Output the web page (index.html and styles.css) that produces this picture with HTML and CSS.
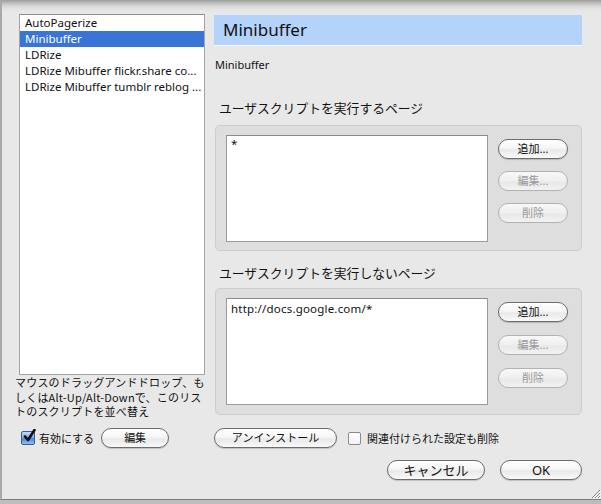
FILE: index.html
```html
<!DOCTYPE html>
<html lang="ja">
<head>
<meta charset="utf-8">
<link rel="stylesheet" href="styles.css">
</head>
<body>
<div class="window">
  <div class="content">
    <div class="left">
      <ul class="list">
        <li>AutoPagerize</li>
        <li class="sel">Minibuffer</li>
        <li>LDRize</li>
        <li>LDRize Mibuffer flickr.share co...</li>
        <li>LDRize Mibuffer tumblr reblog ...</li>
      </ul>
      <p class="help">マウスのドラッグアンドドロップ、も<br>しくはAlt-Up/Alt-Downで、このリス<br>トのスクリプトを並べ替え</p>
    </div>
    <div class="right">
      <div class="title">Minibuffer</div>
      <div class="desc">Minibuffer</div>
      <div class="glabel first">ユーザスクリプトを実行するページ</div>
      <div class="group">
        <div class="area">*</div>
        <div class="btns">
          <button class="btn small">追加...</button>
          <button class="btn small dis">編集...</button>
          <button class="btn small dis">削除</button>
        </div>
      </div>
      <div class="glabel">ユーザスクリプトを実行しないページ</div>
      <div class="group g2">
        <div class="area">http://docs.google.com/*</div>
        <div class="btns">
          <button class="btn small">追加...</button>
          <button class="btn small dis">編集...</button>
          <button class="btn small dis">削除</button>
        </div>
      </div>
    </div>
    <div class="row lrow">
      <span class="cb on"><svg width="14" height="15" viewBox="0 0 14 15"><path d="M3 7.5 L6 11 L12.5 1" fill="none" stroke="#0d0d1a" stroke-width="2.6" stroke-linecap="round" stroke-linejoin="round"/></svg></span>
      <span class="cbl">有効にする</span>
      <button class="btn mid edit">編集</button>
    </div>
    <div class="row rrow">
      <button class="btn mid uninst">アンインストール</button>
      <span class="cb off"></span>
      <span class="cbl wide">関連付けられた設定も削除</span>
    </div>
  </div>
  <div class="footer">
    <button class="btn big cancel">キャンセル</button>
    <button class="btn big ok">OK</button>
  </div>
  <svg class="grip" width="12" height="12" viewBox="0 0 12 12"><path d="M11 3 L3 11 M11 6 L6 11 M11 9 L9 11" stroke="#8a8a8a" stroke-width="1"/><path d="M12 4 L4 12 M12 7 L7 12 M12 10 L10 12" stroke="#fafafa" stroke-width="1"/></svg>
</div>
</body>
</html>
```
FILE: styles.css
```css
* { box-sizing: border-box; }
html, body { margin: 0; padding: 0; }
body {
  background: #bdbdbd;
  width: 601px;
  height: 504px;
  overflow: hidden;
  font-family: "Noto Sans", "Noto Sans CJK JP", sans-serif;
  color: #111;
}
.window {
  position: relative;
  width: 601px;
  height: 500px;
  border-bottom: 1px solid #7c7c7c;
  border-left: 2px solid #a9a9a9;
  background: linear-gradient(to bottom, #9d9d9d 0px, #bdbdbd 3px, #d6d6d6 6px, #e3e3e3 9px, #e8e8e8 12px);
}
.content {
  display: grid;
  grid-template-columns: 190px 368px;
  column-gap: 9px;
  padding: 14px 0 0 13px;
}
.left { display: flex; flex-direction: column; }
.list {
  list-style: none;
  margin: 0 0 0 4px;
  padding: 0;
  width: 186px;
  height: 361px;
  background: #fff;
  border: 1px solid #a3a3a3;
  border-top-color: #8e8e8e;
  font-size: 11.5px;
}
.list li {
  height: 16px;
  line-height: 16px;
  padding-left: 5px;
  white-space: nowrap;
  overflow: hidden;
}
.list li.sel { background: #3875d7; color: #fff; }
.help {
  margin: 0;
  height: 42px;
  font-family: "Noto Sans CJK JP", sans-serif;
  font-size: 11px;
  line-height: 14.5px;
  letter-spacing: 0.2px;
  white-space: nowrap;
}
.right { display: flex; flex-direction: column; }
.title {
  margin-top: 1px;
  height: 31px;
  background: #b4d3fa;
  border-bottom: 1px solid #f6f6f6;
  font-size: 17px;
  line-height: 30px;
  padding-left: 9px;
}
.desc {
  margin-top: 12px;
  font-size: 11px;
  line-height: 14px;
  padding-left: 1px;
}
.glabel {
  margin-top: 14px;
  padding-left: 5px;
  font-family: "Noto Sans CJK JP", sans-serif;
  font-size: 12.8px;
  line-height: 16px;
}
.glabel.first { margin-top: 28px; }
.group {
  margin-top: 9px;
  margin-left: 1px;
  height: 126px;
  background: #dedede;
  border: 1px solid #cdcdcd;
  border-radius: 5px;
  display: flex;
  padding: 9px 0 0 10px;
}
.group.g2 { margin-top: 7px; height: 127px; }
.area {
  width: 262px;
  height: 107px;
  background: #fff;
  border: 1px solid #9c9c9c;
  border-top-color: #8a8a8a;
  font-size: 11.5px;
  letter-spacing: 0.2px;
  line-height: 14px;
  padding: 1px 0 0 4px;
}
.g2 .area { padding-top: 3px; }
.btns {
  display: flex;
  flex-direction: column;
  gap: 12px;
  margin-left: 10px;
  padding-top: 4px;
}
.g2 .btns { gap: 13px; }
.btn {
  font-family: "Noto Sans", "Noto Sans CJK JP", sans-serif;
  color: #111;
  height: 20px;
  padding: 0;
  border: 1px solid #6c6c6c;
  border-radius: 10px;
  background: linear-gradient(to bottom, #ffffff 0%, #f6f6f6 45%, #e9e9e9 55%, #f3f3f3 85%, #fbfbfb 100%);
  box-shadow: 0 1px 1px rgba(0,0,0,0.18);
  line-height: 18px;
}
.btn.small { width: 70px; font-size: 11px; }
.btn.dis {
  color: #9a9a9a;
  border-color: #b2b2b2;
  background: linear-gradient(to bottom, #f8f8f8 0%, #efefef 50%, #e8e8e8 55%, #f2f2f2 100%);
  box-shadow: none;
}
.row {
  display: flex;
  align-items: center;
  margin-top: 11px;
  height: 20px;
}
.lrow { padding-left: 6px; }
.cb {
  display: inline-block;
  width: 14px;
  height: 14px;
  border-radius: 2px;
  flex: none;
}
.cb.on {
  background: linear-gradient(to bottom, #c6ddf6 0%, #73a7e6 50%, #4b8ad7 55%, #8fc0f1 100%);
  border: 1px solid #3e5f8e;
  position: relative;
}
.cb.on svg { position: absolute; left: 0; top: -3px; }
.cb.off {
  width: 13px;
  height: 13px;
  background: linear-gradient(to bottom, #fff, #f2f2f2);
  border: 1px solid #8a8a8a;
  margin-left: 11px;
}
.cbl {
  font-family: "Noto Sans CJK JP", sans-serif;
  font-size: 11px;
  margin-left: 4px;
}
.cbl.wide { margin-left: 6px; }
.btn.mid { font-size: 11px; }
.edit { width: 68px; margin-left: 7px; }
.uninst { width: 123px; }
.footer {
  display: flex;
  justify-content: flex-end;
  gap: 15px;
  padding-right: 19px;
  margin-top: 12px;
}
.btn.big { font-size: 13px; }
.cancel { width: 98px; }
.ok { width: 82px; }
.grip { position: absolute; right: 0; bottom: 0; }
```
